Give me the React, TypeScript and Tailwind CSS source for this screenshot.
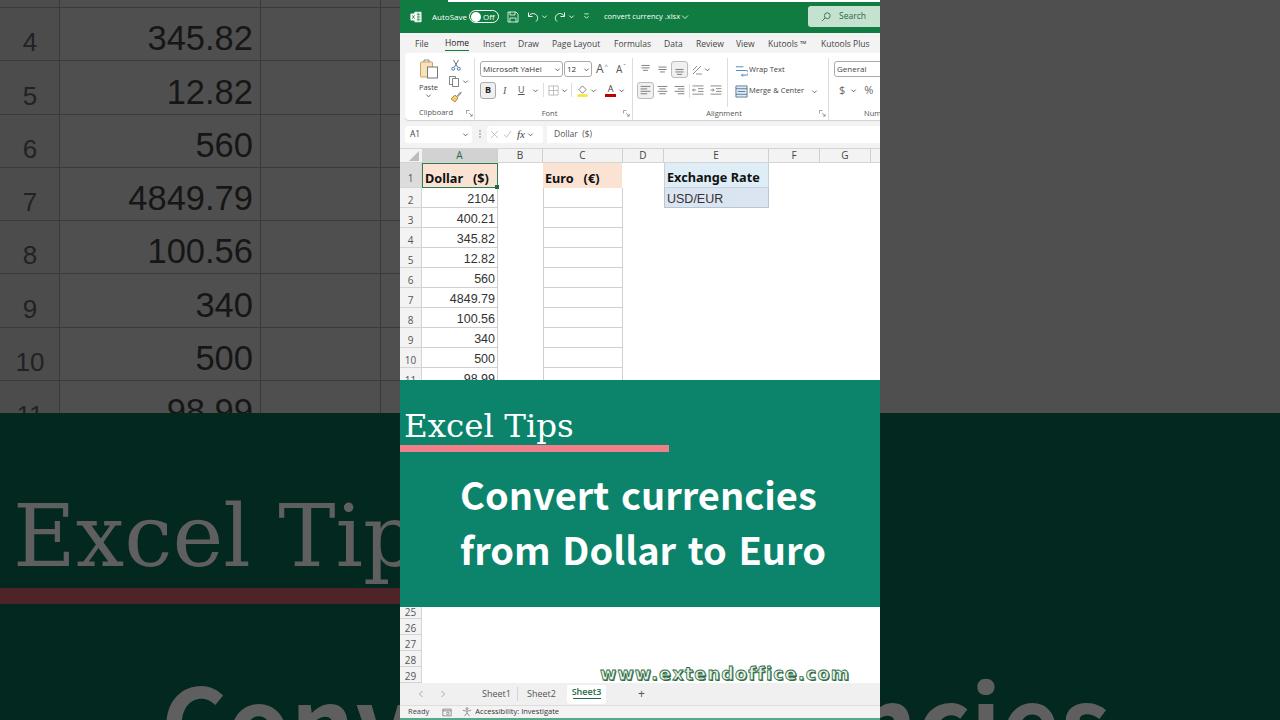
const rows: [string, string][] = [
  ["2", "2104"],
  ["3", "400.21"],
  ["4", "345.82"],
  ["5", "12.82"],
  ["6", "560"],
  ["7", "4849.79"],
  ["8", "100.56"],
  ["9", "340"],
  ["10", "500"],
  ["11", "98.99"],
];

const bgRows = rows.slice(2);

function Chev({ className = "" }: { className?: string }) {
  return (
    <svg viewBox="0 0 8 8" className={`h-[7px] w-[7px] shrink-0 ${className}`} fill="none" stroke="#555" strokeWidth="1">
      <path d="M1.5 3l2.5 2.5L6.5 3" />
    </svg>
  );
}

function Launcher() {
  return (
    <svg viewBox="0 0 8 8" className="h-[7px] w-[7px] shrink-0" fill="none" stroke="#777" strokeWidth="0.8">
      <path d="M.5 4V.5H4M7 7L3.5 3.5M7 4.5V7H4.5" />
    </svg>
  );
}

function Lines({ align, boxed }: { align: "l" | "c" | "r" | "t" | "m" | "b"; boxed?: boolean }) {
  const d = {
    l: "M2 3h12M2 6h8M2 9h12M2 12h8",
    c: "M2 3h12M4 6h8M2 9h12M4 12h8",
    r: "M2 3h12M6 6h8M2 9h12M6 12h8",
    t: "M3 3h10M3 6h10M5 9h6",
    m: "M3 5h10M3 8h10M5 11h6",
    b: "M3 8h10M3 11h10M5 14h6",
  }[align];
  return (
    <div className={`flex h-[17px] w-[17px] shrink-0 items-center justify-center rounded-[3px] ${boxed ? "border border-[#bbb] bg-[#f0f0f0]" : ""}`}>
      <svg viewBox="0 0 16 16" className="h-[13px] w-[13px]" fill="none" stroke="#666" strokeWidth="1">
        <path d={d} />
      </svg>
    </div>
  );
}

function BgColumns({ h, label, value }: { h: string; label?: string; value?: string }) {
  return (
    <div className={`flex ${h} shrink-0 ${label ? "border-t border-[#3a3a3a]" : ""}`}>
      <div className="flex w-[60px] shrink-0 items-end justify-center border-r border-[#3a3a3a] bg-[#4c4c4c] pl-[1px] font-['Liberation_Sans',sans-serif] text-[26px] leading-[36px] text-[#222]">
        {label}
      </div>
      <div className="flex w-[201px] shrink-0 items-end justify-end border-r border-[#3a3a3a] pr-[7px] pb-[2px] font-['Liberation_Sans',sans-serif] text-[34.5px] leading-[40px] text-[#161616]">
        {value}
      </div>
      <div className="w-[120px] shrink-0 border-r border-[#3a3a3a]" />
    </div>
  );
}

function LeftSide() {
  return (
    <div className="flex h-[720px] w-[400px] shrink-0 flex-col overflow-hidden bg-[#4f4f4f]">
      <div className="h-[413px] shrink-0 overflow-hidden">
        <BgColumns h="h-[7px]" />
        {bgRows.map(([n, v]) => (
          <BgColumns key={n} h="h-[53.3px]" label={n} value={v} />
        ))}
      </div>
      <div className="flex flex-1 flex-col bg-[#032820] pt-[85px]">
        <div className="h-[76px] pl-[13px] font-['DejaVu_Serif',serif] text-[86px] leading-[76px] whitespace-nowrap text-[#5f5f5f]">
          Excel Tips
        </div>
        <div className="mt-[14px] h-[16px] bg-[#4f2429]" />
        <div className="mt-[64px] pl-[161px] font-['Noto_Sans_CJK_SC',sans-serif] text-[101px] leading-[100px] font-bold whitespace-nowrap text-[#5f5f5f] [word-spacing:8px]">
          Convert currencies
        </div>
      </div>
    </div>
  );
}

function RightSide() {
  return (
    <div className="flex h-[720px] w-[400px] shrink-0 flex-col overflow-hidden bg-[#4f4f4f]">
      <div className="h-[413px] shrink-0" />
      <div className="flex flex-1 justify-end bg-[#032820] pt-[254px] pr-[170px]">
        <div className="shrink-0 font-['Noto_Sans_CJK_SC',sans-serif] text-[101px] leading-[100px] font-bold whitespace-nowrap text-[#5f5f5f] [word-spacing:8px]">
          Convert currencies
        </div>
      </div>
    </div>
  );
}

function TitleBar() {
  return (
    <div className="flex h-[33px] shrink-0 flex-col bg-[#107c41] font-['Open_Sans',sans-serif] text-[8px] text-white">
      <div className="ml-[48px] h-[2px] shrink-0 bg-white" />
      <div className="flex flex-1 items-center pb-[2px]">
        <svg viewBox="0 0 14 14" className="ml-[10px] h-[12px] w-[12px]" fill="none">
          <rect x="5" y="1" width="8.5" height="12" rx="1" fill="#e8f3ec" />
          <path d="M7 4h5M7 7h5M7 10h5M9.5 2v10" stroke="#107c41" strokeWidth="0.7" />
          <rect x="0.5" y="3" width="7.5" height="8" rx="1" fill="#fff" />
          <path d="M2.5 5l3 4M5.5 5l-3 4" stroke="#107c41" strokeWidth="1" />
        </svg>
        <span className="ml-[10px] w-[37px] whitespace-nowrap">AutoSave</span>
        <div className="flex h-[13px] w-[30px] items-center rounded-full border border-white pl-[1px]">
          <div className="h-[10px] w-[10px] rounded-full bg-white" />
          <span className="ml-[2px] text-[8px]">Off</span>
        </div>
        <svg viewBox="0 0 12 12" className="ml-[8px] h-[12px] w-[12px]" fill="none" stroke="#fff" strokeWidth="0.8">
          <path d="M1 1h8l2 2v8H1zM3 1v3h5V1M3 11V7h6v4" />
        </svg>
        <svg viewBox="0 0 12 12" className="ml-[8px] h-[12px] w-[12px]" fill="none" stroke="#fff" strokeWidth="1">
          <path d="M1.5 1.5v4h4M1.7 5.3C3 2.8 6 1.8 8.5 3.3s3 5 .5 7.2" />
        </svg>
        <Chev className="ml-[2px] [&>path]:stroke-white" />
        <svg viewBox="0 0 12 12" className="ml-[6px] h-[12px] w-[12px]" fill="none" stroke="#fff" strokeWidth="1">
          <path d="M10.5 1.5v4h-4M10.3 5.3C9 2.8 6 1.8 3.5 3.3s-3 5-.5 7.2" />
        </svg>
        <Chev className="ml-[2px] [&>path]:stroke-white" />
        <svg viewBox="0 0 8 8" className="ml-[8px] h-[7px] w-[7px]" fill="none" stroke="#fff" strokeWidth="0.9">
          <path d="M1.5 1h5M1.5 3.5L4 6l2.5-2.5" />
        </svg>
        <span className="ml-[14px] w-[76px] text-[7.5px] whitespace-nowrap">convert currency .xlsx</span>
        <svg viewBox="0 0 8 8" className="ml-[1px] h-[8px] w-[8px]" fill="none" stroke="#fff" strokeWidth="0.8">
          <path d="M1 2.5L4 5.5l3-3" />
        </svg>
        <div className="ml-auto flex h-[21px] w-[72px] items-center rounded-l-[3px] bg-[#c5e2d0] pl-[13px] text-[#24684a]">
          <svg viewBox="0 0 12 12" className="h-[10px] w-[10px]" fill="none" stroke="#24684a" strokeWidth="1">
            <circle cx="7.5" cy="4.5" r="3.5" />
            <path d="M5 7l-4 4" />
          </svg>
          <span className="ml-[8px] text-[8.5px]">Search</span>
        </div>
      </div>
    </div>
  );
}

function TabsRow() {
  const tabs: [string, string][] = [
    ["File", "w-[30px]"],
    ["Home", "w-[38px]"],
    ["Insert", "w-[35px]"],
    ["Draw", "w-[34px]"],
    ["Page Layout", "w-[62px]"],
    ["Formulas", "w-[50px]"],
    ["Data", "w-[32px]"],
    ["Review", "w-[40px]"],
    ["View", "w-[32px]"],
    ["Kutools ™", "w-[53px]"],
    ["Kutools Plus", "w-[60px]"],
  ];
  return (
    <div className="flex h-[20px] shrink-0 items-center pt-[2px] pl-[15px] font-['Open_Sans',sans-serif] text-[8.5px] text-[#444]">
      {tabs.map(([t, w]) => (
        <div key={t} className={`${w} shrink-0 whitespace-nowrap`}>
          {t === "Home" ? (
            <span className="inline-block border-b-[1.5px] border-[#107c41] text-[#222]">{t}</span>
          ) : (
            t
          )}
        </div>
      ))}
    </div>
  );
}

function GroupLabel({ text, shift }: { text: string; shift: string }) {
  return (
    <div className="flex h-[14px] items-center font-['Open_Sans',sans-serif] text-[7.5px] text-[#555]">
      <span className={`flex-1 text-center ${shift}`}>{text}</span>
      <Launcher />
    </div>
  );
}

function ClipboardGroup() {
  return (
    <div className="flex w-[70px] shrink-0 flex-col border-r border-[#ddd] pr-[1px]">
      <div className="flex h-[53px] pl-[13px]">
        <div className="flex w-[21px] flex-col items-center pt-[1px] font-['Open_Sans',sans-serif] text-[7.5px] text-[#444]">
          <svg viewBox="0 0 20 20" className="h-[20px] w-[20px]" fill="none">
            <rect x="1.5" y="3" width="12" height="15" rx="1" fill="#f6e3bb" stroke="#c9a25a" />
            <path d="M5 3V1h5v2" stroke="#888" />
            <rect x="8.5" y="8" width="10" height="11" fill="#fff" stroke="#777" />
          </svg>
          <span className="mt-[3px] leading-[10px]">Paste</span>
          <Chev />
        </div>
        <div className="ml-[9px] flex flex-col items-start gap-[4px] pt-[1px]">
          <svg viewBox="0 0 12 12" className="ml-[2px] h-[12px] w-[12px]" fill="none" stroke="#666" strokeWidth="0.9">
            <path d="M3.5 1l4 7M8.5 1l-4 7" />
            <circle cx="3.2" cy="9.7" r="1.5" stroke="#3a6ea5" />
            <circle cx="8.8" cy="9.7" r="1.5" stroke="#3a6ea5" />
          </svg>
          <div className="flex items-center gap-[2px]">
            <svg viewBox="0 0 12 12" className="h-[12px] w-[12px]" fill="none" stroke="#666" strokeWidth="0.8">
              <path d="M1.5 1.5h6v8h-6z" />
              <path d="M4.5 3.5h6v8h-6z" fill="#fff" />
            </svg>
            <Chev />
          </div>
          <svg viewBox="0 0 12 12" className="ml-[2px] h-[12px] w-[12px]" fill="none" strokeWidth="0.9">
            <path d="M7 5l3.5-4 .7.7L7.6 6" stroke="#777" />
            <path d="M1 8l4-4 3 3-3 4-4-3z" fill="#f2cc7a" stroke="#b88a2e" />
          </svg>
        </div>
      </div>
      <div className="pl-[14px]">
        <div className="flex h-[14px] items-center font-['Open_Sans',sans-serif] text-[7.5px] text-[#555]">
          <span className="flex-1">Clipboard</span>
          <Launcher />
        </div>
      </div>
    </div>
  );
}

function FontGroup() {
  return (
    <div className="flex w-[158px] shrink-0 flex-col border-r border-[#ddd] pr-[2px] pl-[5px]">
      <div className="flex h-[53px] flex-col pt-[3px] font-['Open_Sans',sans-serif]">
        <div className="flex h-[16px] items-center gap-[1px]">
          <div className="flex h-[16px] w-[83px] items-center justify-between rounded-[3px] border border-[#aaa] pr-[1px] pl-[2px] text-[8px] text-[#333]">
            Microsoft YaHei <Chev />
          </div>
          <div className="flex h-[16px] w-[28px] items-center justify-between rounded-[3px] border border-[#aaa] pr-[1px] pl-[2px] text-[8px] text-[#333]">
            12 <Chev />
          </div>
          <span className="ml-[3px] text-[12px] text-[#555]">A</span>
          <span className="-mt-[5px] text-[6px] text-[#666]">^</span>
          <span className="ml-[7px] text-[10px] text-[#555]">A</span>
          <span className="-mt-[5px] text-[6px] text-[#666]">ˇ</span>
        </div>
        <div className="mt-[4px] flex h-[18px] items-center text-[#555]">
          <div className="flex h-[17px] w-[16px] items-center justify-center rounded-[3px] border border-[#aaa] bg-[#f0f0f0] text-[9px] font-bold text-[#222]">B</div>
          <span className="w-[17px] pl-[7px] font-['Liberation_Serif',serif] text-[10px] italic">I</span>
          <span className="ml-[5px] w-[10px] text-[9px] underline">U</span>
          <Chev className="ml-[4px]" />
          <div className="mx-[4px] h-[14px] w-px bg-[#ddd]" />
          <svg viewBox="0 0 12 12" className="h-[11px] w-[11px]" fill="none" stroke="#aaa" strokeWidth="0.8">
            <path d="M1 1h10v10H1zM6 1v10M1 6h10" />
          </svg>
          <Chev className="ml-[2px]" />
          <div className="mx-[3px] h-[14px] w-px bg-[#ddd]" />
          <svg viewBox="0 0 12 14" className="ml-[2px] h-[13px] w-[11px]" fill="none">
            <path d="M2 6l4-4 4 4-4 4z" fill="#fff" stroke="#555" strokeWidth="0.8" />
            <rect x="0.5" y="11" width="11" height="3" fill="#f5e642" />
          </svg>
          <Chev className="ml-[2px]" />
          <div className="ml-[8px] flex h-[13px] w-[11px] flex-col items-center text-[9px] leading-[10px] text-[#444]">
            A
            <div className="h-[3px] w-[11px] bg-[#c00000]" />
          </div>
          <Chev className="ml-[2px]" />
        </div>
      </div>
      <GroupLabel text="Font" shift="pr-[4px]" />
    </div>
  );
}

function AlignGroup() {
  return (
    <div className="flex w-[196px] shrink-0 flex-col border-r border-[#ddd] pr-[2px]">
      <div className="flex h-[53px] font-['Open_Sans',sans-serif] text-[7.5px] text-[#444]">
        <div className="flex w-[95px] shrink-0 flex-col gap-[4px] border-r border-[#ddd] pt-[3px] pl-[4px]">
          <div className="flex h-[17px] items-center">
            <Lines align="t" />
            <Lines align="m" />
            <Lines align="b" boxed />
            <svg viewBox="0 0 12 12" className="ml-[3px] h-[12px] w-[12px]" fill="none" stroke="#777" strokeWidth="0.8">
              <path d="M2 10L10 2M5 10h6M2 6l4-4" />
            </svg>
            <Chev className="ml-[1px]" />
          </div>
          <div className="flex h-[17px] items-center">
            <Lines align="l" boxed />
            <Lines align="c" />
            <Lines align="r" />
            <div className="mx-[1px] h-[14px] w-px bg-[#ddd]" />
            <svg viewBox="0 0 14 12" className="h-[11px] w-[14px]" fill="none" stroke="#666" strokeWidth="0.8">
              <path d="M1 1h12M7 4h6M7 7h6M1 10h12M5 5.5H1M2.5 4L1 5.5 2.5 7" />
            </svg>
            <svg viewBox="0 0 14 12" className="ml-[4px] h-[11px] w-[14px]" fill="none" stroke="#666" strokeWidth="0.8">
              <path d="M1 1h12M7 4h6M7 7h6M1 10h12M1 5.5h4M3.5 4L5 5.5 3.5 7" />
            </svg>
          </div>
        </div>
        <div className="flex flex-1 flex-col gap-[7px] pt-[5px] pl-[7px]">
          <div className="flex h-[14px] items-center">
            <svg viewBox="0 0 14 14" className="h-[13px] w-[13px]" fill="none" strokeWidth="0.9">
              <path d="M1 3h8M1 7h11a2.5 2.5 0 010 5H7" stroke="#2f75b5" />
              <path d="M8.5 10.5L7 12l1.5 1.5" stroke="#2f75b5" />
            </svg>
            <span className="ml-[1px]">Wrap Text</span>
          </div>
          <div className="flex h-[14px] items-center">
            <svg viewBox="0 0 14 14" className="h-[13px] w-[13px]" fill="#dfe9f3" stroke="#47708f" strokeWidth="0.9">
              <path d="M1 1h12v12H1zM1 4h12M1 10h12M3 7h8" />
            </svg>
            <span className="ml-[1px] whitespace-nowrap">Merge &amp; Center</span>
            <Chev className="ml-[7px]" />
          </div>
        </div>
      </div>
      <GroupLabel text="Alignment" shift="pr-[4px]" />
    </div>
  );
}

function NumberGroup() {
  return (
    <div className="flex flex-1 flex-col overflow-hidden pl-[5px]">
      <div className="flex h-[53px] flex-col pt-[3px] font-['Open_Sans',sans-serif] text-[8px] text-[#444]">
        <div className="flex h-[16px] w-[60px] shrink-0 items-center rounded-[3px] border border-[#aaa] pl-[2px]">General</div>
        <div className="mt-[4px] flex h-[18px] items-center pl-[5px] text-[11px] text-[#666]">
          $
          <Chev className="ml-[5px]" />
          <span className="ml-[7px]">%</span>
        </div>
      </div>
      <div className="flex h-[14px] items-center pl-[30px] font-['Open_Sans',sans-serif] text-[7.5px] whitespace-nowrap text-[#555]">
        Number
      </div>
    </div>
  );
}

function Ribbon() {
  return (
    <div className="ml-[5px] flex h-[67px] shrink-0 rounded-l-[4px] bg-white pt-[5px] shadow-[0_1px_1px_rgba(0,0,0,0.15)]">
      <ClipboardGroup />
      <FontGroup />
      <AlignGroup />
      <NumberGroup />
    </div>
  );
}

function FormulaBar() {
  return (
    <div className="mt-[5px] flex h-[18px] shrink-0 items-center pl-[5px] font-['Open_Sans',sans-serif] text-[8.5px] text-[#555]">
      <div className="flex h-[17px] w-[67px] items-center justify-between rounded-[3px] bg-white pr-[3px] pl-[5px] text-[#444]">
        A1 <Chev />
      </div>
      <div className="flex w-[15px] shrink-0 justify-center">
        <svg viewBox="0 0 4 10" className="h-[10px] w-[4px]" fill="#666">
          <circle cx="2" cy="2" r="0.7" />
          <circle cx="2" cy="5" r="0.7" />
          <circle cx="2" cy="8" r="0.7" />
        </svg>
      </div>
      <div className="flex h-[17px] w-[56px] items-center rounded-[3px] bg-white pl-[3px]">
        <svg viewBox="0 0 10 10" className="h-[9px] w-[9px]" fill="none" stroke="#bbb">
          <path d="M1 1l8 8M9 1L1 9" />
        </svg>
        <svg viewBox="0 0 10 10" className="ml-[4px] h-[9px] w-[9px]" fill="none" stroke="#bbb">
          <path d="M1 5l3 3 5-7" />
        </svg>
        <span className="ml-[5px] font-['Liberation_Serif',serif] text-[11px] text-[#444] italic">fx</span>
        <Chev className="ml-[2px]" />
      </div>
      <div className="ml-[4px] flex h-[17px] flex-1 items-center bg-white pl-[7px]">Dollar&nbsp; ($)</div>
    </div>
  );
}

const cols: [string, string][] = [
  ["A", "w-[76px]"],
  ["B", "w-[45px]"],
  ["C", "w-[80px]"],
  ["D", "w-[41px]"],
  ["E", "w-[105px]"],
  ["F", "w-[51px]"],
  ["G", "w-[51px]"],
];

function ColHeaders() {
  return (
    <div className="mt-[5px] flex h-[15px] shrink-0 border-t border-b border-[#d4d4d4] bg-[#f3f3f3] font-['Open_Sans',sans-serif] text-[10px] leading-[13px] text-[#444]">
      <div className="flex w-[22px] shrink-0 items-end justify-end pr-[3px] pb-[1px]">
        <svg viewBox="0 0 10 10" className="h-[10px] w-[10px]">
          <path d="M10 0v10H0z" fill="#bdbdbd" />
        </svg>
      </div>
      {cols.map(([c, w]) => (
        <div key={c} className={`${w} shrink-0 border-r border-[#cfcfcf] text-center ${c === "A" ? "bg-[#d2d2d2] text-[#1d6b46]" : ""}`}>
          {c}
        </div>
      ))}
    </div>
  );
}

function RowLabel({ children, selected, h, pad }: { children: string; selected?: boolean; h: string; pad: string }) {
  return (
    <div className={`flex ${h} ${pad} w-[22px] shrink-0 items-center justify-center border-r border-b border-[#d4d4d4] font-['Open_Sans',sans-serif] text-[10px] leading-[12px] text-[#555] ${selected ? "bg-[#dcdcdc] text-[#1d6b46]" : "bg-[#f3f3f3]"}`}>
      {children}
    </div>
  );
}

function Grid() {
  return (
    <div className="h-[217px] shrink-0 overflow-hidden bg-white">
      <div className="flex h-[25px]">
        <RowLabel h="h-[25px]" pad="pt-[5px]" selected>1</RowLabel>
        <div className="relative flex h-[25px] w-[76px] shrink-0 items-center border-[1.5px] border-[#2f7d55] bg-[#fbe3d3] pt-[7px] pl-[2px] font-['Noto_Sans',sans-serif] text-[12.7px] font-bold text-[#111]">
          Dollar&nbsp;&nbsp;&nbsp;($)
          <div className="absolute -right-[2px] -bottom-[2px] h-[4px] w-[4px] bg-[#1d6b46]" />
        </div>
        <div className="w-[45px] shrink-0" />
        <div className="flex w-[79px] shrink-0 items-center bg-[#fbe3d3] pt-[6px] pl-[2px] font-['Noto_Sans',sans-serif] text-[12.7px] font-bold text-[#111]">
          Euro&nbsp;&nbsp;&nbsp;(€)
        </div>
        <div className="w-[42px] shrink-0" />
        <div className="flex w-[105px] shrink-0 items-center border-x border-b border-[#c4d2dc] bg-[#dfeef6] pt-[6px] pl-[2px] font-['Noto_Sans',sans-serif] text-[12.7px] font-bold text-[#111]">
          Exchange Rate
        </div>
      </div>
      {rows.map(([n, v], i) => (
        <div key={n} className="flex h-[20px]">
          <RowLabel h="h-[20px]" pad="pt-[4px]">{n}</RowLabel>
          <div className="flex w-[76px] shrink-0 items-center justify-end border-r border-b border-[#cfcfcf] pt-[3px] pr-[2px] font-['Liberation_Sans',sans-serif] text-[12.5px] text-[#333]">
            {v}
          </div>
          <div className="w-[45px] shrink-0" />
          <div className="w-[80px] shrink-0 border-x border-b border-[#cfcfcf]" />
          <div className="w-[41px] shrink-0" />
          {i === 0 && (
            <div className="flex w-[105px] shrink-0 items-center border-x border-b border-[#b8c6d2] bg-[#dbe5f1] pt-[3px] pl-[2px] font-['Liberation_Sans',sans-serif] text-[12.5px] text-[#333]">
              USD/EUR
            </div>
          )}
        </div>
      ))}
    </div>
  );
}

function Band() {
  return (
    <div className="flex h-[227px] shrink-0 flex-col bg-[#0b846b]">
      <div className="mt-[27px] h-[38px] pl-[4px] font-['DejaVu_Serif',serif] text-[32.5px] leading-[39px] whitespace-nowrap text-white">
        Excel Tips
      </div>
      <div className="h-[7px] w-[269px] bg-[#f07f8a]" />
      <div className="mt-[14px] pl-[60px] font-['Noto_Sans_CJK_SC',sans-serif] text-[38px] leading-[55px] font-bold whitespace-nowrap text-white [word-spacing:3px]">
        Convert currencies
        <br />
        from Dollar to Euro
      </div>
    </div>
  );
}

function BottomRows() {
  return (
    <div className="flex h-[76px] shrink-0 flex-col overflow-hidden bg-white">
      <RowLabel h="h-[12px]" pad="pb-[1px]">25</RowLabel>
      {["26", "27", "28", "29"].map((n) => (
        <RowLabel key={n} h="h-[16px]" pad="pt-[2px]">{n}</RowLabel>
      ))}
    </div>
  );
}

function SheetTabs() {
  return (
    <div className="flex h-[22px] shrink-0 items-center bg-[#f0f0f0] font-['Open_Sans',sans-serif] text-[9px] text-[#555]">
      <svg viewBox="0 0 8 8" className="ml-[17px] h-[8px] w-[8px]" fill="none" stroke="#aaa">
        <path d="M5.5 1L2.5 4l3 3" />
      </svg>
      <svg viewBox="0 0 8 8" className="ml-[14px] h-[8px] w-[8px]" fill="none" stroke="#aaa">
        <path d="M2.5 1l3 3-3 3" />
      </svg>
      <span className="ml-[35px] w-[36px] shrink-0 border-r border-[#d4d4d4]">Sheet1</span>
      <span className="ml-[9px] w-[36px] shrink-0">Sheet2</span>
      <div className="ml-[4px] flex h-[19px] w-[39px] shrink-0 flex-col items-center rounded-b-[3px] bg-white font-semibold text-[#1d6b46]">
        <span className="leading-[13px]">Sheet3</span>
        <div className="h-[1.5px] w-[28px] bg-[#1d6b46]" />
      </div>
      <span className="ml-[32px] text-[12px]">+</span>
    </div>
  );
}

function StatusBar() {
  return (
    <div className="flex h-[15px] shrink-0 items-center border-t border-b-2 border-[#dcdcdc] border-b-[#5aa888] bg-[#f3f3f3] font-['Open_Sans',sans-serif] text-[7.5px] text-[#444]">
      <span className="ml-[8px]">Ready</span>
      <svg viewBox="0 0 12 10" className="ml-[13px] h-[9px] w-[10px]" fill="none" stroke="#666" strokeWidth="0.8">
        <path d="M1 1h10v8H1zM1 3h10" />
        <circle cx="7" cy="6" r="1.5" />
      </svg>
      <svg viewBox="0 0 12 12" className="ml-[10px] h-[10px] w-[10px]" fill="none" stroke="#666" strokeWidth="0.8">
        <circle cx="6" cy="2" r="1.2" />
        <path d="M1 4l5 1 5-1M6 5v2l-3 4M6 7l3 4" />
      </svg>
      <span className="ml-[3px] font-medium whitespace-nowrap text-[#333]">Accessibility: Investigate</span>
    </div>
  );
}

function Center() {
  return (
    <div className="relative flex h-[720px] w-[480px] shrink-0 flex-col overflow-hidden bg-[#f3f3f3]">
      <TitleBar />
      <TabsRow />
      <Ribbon />
      <FormulaBar />
      <ColHeaders />
      <Grid />
      <Band />
      <BottomRows />
      <SheetTabs />
      <StatusBar />
      {/* watermark sits on top of the sheet */}
      <div className="absolute top-[662px] left-[200px] font-['DejaVu_Sans',sans-serif] text-[17.5px] leading-[24px] font-bold tracking-[1.25px] whitespace-nowrap text-[#e6f2e6] [-webkit-text-stroke:0.8px_#2f6b45] [text-shadow:1px_1px_0_#2f6b45]">
        www.extendoffice.com
      </div>
    </div>
  );
}

export default function App() {
  return (
    <div className="flex h-[720px] w-[1280px] overflow-hidden">
      <LeftSide />
      <Center />
      <RightSide />
    </div>
  );
}
